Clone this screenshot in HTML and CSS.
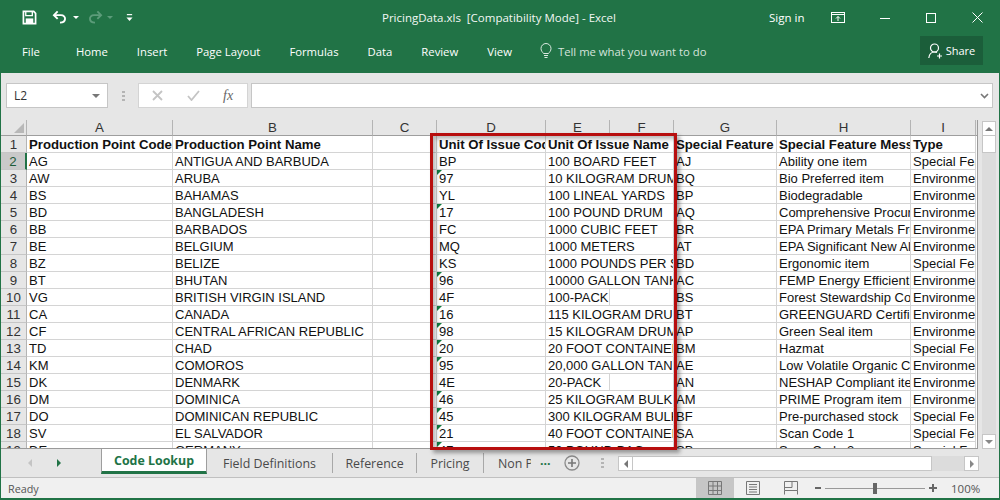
FILE: index.html
```html
<!DOCTYPE html>
<html lang="en">
<head>
<meta charset="utf-8">
<title>PricingData.xls - Excel</title>
<link rel="stylesheet" href="styles.css">
</head>
<body>
<div class="app">
  <header class="titlebar">
    <div class="qat">
      <svg class="ic-save" width="15" height="15" viewBox="0 0 16 16"><path d="M1.500 1.500h11l2 2v11h-13z" fill="none" stroke="#fff" stroke-width="1.800"/><path d="M4 2v4h7V2" fill="none" stroke="#fff" stroke-width="1.400"/><rect x="4" y="9" width="8" height="5.500" fill="#fff"/></svg>
      <svg class="ic-undo" width="16" height="15" viewBox="0 0 17 16"><path d="M6 1.500 2 5.500l4 4" fill="none" stroke="#fff" stroke-width="2"/><path d="M2.500 5.500h7c6 0 6 8-1 8" fill="none" stroke="#fff" stroke-width="2"/></svg>
      <span class="caret"></span>
      <svg class="ic-redo" width="16" height="15" viewBox="0 0 17 16"><path d="M11 1.500l4 4-4 4" fill="none" stroke="#5c9c7a" stroke-width="2"/><path d="M14.500 5.500h-7c-6 0-6 8 1 8" fill="none" stroke="#5c9c7a" stroke-width="2"/></svg>
      <span class="caret caret-dim"></span>
      <svg class="ic-more" width="7" height="8" viewBox="0 0 8 9"><rect x="1" y="0" width="6" height="1.300" fill="#fff"/><path d="M0.500 4h7L4 8z" fill="#fff"/></svg>
    </div>
    <div class="doc-title">PricingData.xls&nbsp; [Compatibility Mode] - Excel</div>
    <div class="signin">Sign in</div>
    <div class="winctl">
      <svg width="14" height="11" viewBox="0 0 14 11"><rect x="0.500" y="0.500" width="13" height="10" fill="none" stroke="#fff"/><path d="M0.500 2.500h13" stroke="#fff"/><path d="M7 9V4.500M5 6.500l2-2 2 2" fill="none" stroke="#fff"/></svg>
      <svg width="10" height="10" viewBox="0 0 10 10"><path d="M0 5.500h10" stroke="#fff"/></svg>
      <svg width="10" height="10" viewBox="0 0 10 10"><rect x="0.500" y="0.500" width="9" height="9" fill="none" stroke="#fff"/></svg>
      <svg width="11" height="11" viewBox="0 0 11 11"><path d="M0.500 0.500l10 10M10.500 0.500l-10 10" stroke="#fff"/></svg>
    </div>
  </header>
  <nav class="ribbon">
    <span class="rtab rtab-file">File</span>
    <span class="rtab">Home</span>
    <span class="rtab">Insert</span>
    <span class="rtab">Page Layout</span>
    <span class="rtab">Formulas</span>
    <span class="rtab">Data</span>
    <span class="rtab">Review</span>
    <span class="rtab">View</span>
    <span class="tell">
      <svg width="12" height="16" viewBox="0 0 12 16"><path d="M3.500 10.500C2.500 9 1 8 1 5.500a5 5 0 0 1 10 0C11 8 9.500 9 8.500 10.500z" fill="none" stroke="#dbe9e1"/><path d="M4 12.500h4M4.500 14.500h3" stroke="#dbe9e1"/></svg>
      Tell me what you want to do
    </span>
    <span class="share">
      <svg width="15" height="16" viewBox="0 0 15 16"><circle cx="6.500" cy="5" r="4" fill="none" stroke="#fff" stroke-width="1.200"/><path d="M0.800 15c.5-4 2.500-6 5.700-6 1 0 1.800.2 2.500.6" fill="none" stroke="#fff" stroke-width="1.200"/><path d="M11.500 10.500v5M9 13h5" stroke="#fff" stroke-width="1.200"/></svg>
      Share
    </span>
  </nav>
  <div class="fbar">
    <div class="namebox"><span>L2</span><i class="tri"></i></div>
    <div class="grip"></div>
    <div class="fbtns">
      <svg width="11" height="11" viewBox="0 0 11 11"><path d="M1 1l9 9M10 1l-9 9" stroke="#c4c4c4" stroke-width="1.800"/></svg>
      <svg width="13" height="11" viewBox="0 0 13 11"><path d="M1 6l3.500 4L12 1" fill="none" stroke="#c4c4c4" stroke-width="1.800"/></svg>
      <span class="fx">fx</span>
    </div>
    <div class="finput"><svg width="9" height="6" viewBox="0 0 9 6"><path d="M1 1l3.500 3.500L8 1" fill="none" stroke="#777" stroke-width="1.600"/></svg></div>
  </div>
  <main class="sheetarea">
    <div class="sheet">
      <div class="hd corner"><i class="corner-tri"></i></div><div class="hd">A</div><div class="hd">B</div><div class="hd">C</div><div class="hd">D</div><div class="hd">E</div><div class="hd">F</div><div class="hd">G</div><div class="hd">H</div><div class="hd">I</div><div class="hd hd-end"></div>

      <div class="num">1</div><div class="c b">Production Point Code</div><div class="c b">Production Point Name</div><div class="c"></div><div class="c b">Unit Of Issue Code</div><div class="c b s2">Unit Of Issue Name</div><div class="c b">Special Feature Code</div><div class="c b">Special Feature Message</div><div class="c b">Type</div><div class="e"></div>

      <div class="num sel">2</div><div class="c">AG</div><div class="c">ANTIGUA AND BARBUDA</div><div class="c"></div><div class="c">BP</div><div class="c s2">100 BOARD FEET</div><div class="c">AJ</div><div class="c">Ability one item</div><div class="c">Special Feature</div><div class="e"></div>

      <div class="num">3</div><div class="c">AW</div><div class="c">ARUBA</div><div class="c"></div><div class="c t">97</div><div class="c s2">10 KILOGRAM DRUM</div><div class="c">BQ</div><div class="c">Bio Preferred item</div><div class="c">Environmental</div><div class="e"></div>

      <div class="num">4</div><div class="c">BS</div><div class="c">BAHAMAS</div><div class="c"></div><div class="c">YL</div><div class="c s2">100 LINEAL YARDS</div><div class="c">BP</div><div class="c">Biodegradable</div><div class="c">Environmental</div><div class="e"></div>

      <div class="num">5</div><div class="c">BD</div><div class="c">BANGLADESH</div><div class="c"></div><div class="c t">17</div><div class="c s2">100 POUND DRUM</div><div class="c">AQ</div><div class="c">Comprehensive Procurement</div><div class="c">Environmental</div><div class="e"></div>

      <div class="num">6</div><div class="c">BB</div><div class="c">BARBADOS</div><div class="c"></div><div class="c">FC</div><div class="c s2">1000 CUBIC FEET</div><div class="c">BR</div><div class="c">EPA Primary Metals Free</div><div class="c">Environmental</div><div class="e"></div>

      <div class="num">7</div><div class="c">BE</div><div class="c">BELGIUM</div><div class="c"></div><div class="c">MQ</div><div class="c s2">1000 METERS</div><div class="c">AT</div><div class="c">EPA Significant New Alternatives</div><div class="c">Environmental</div><div class="e"></div>

      <div class="num">8</div><div class="c">BZ</div><div class="c">BELIZE</div><div class="c"></div><div class="c">KS</div><div class="c s2">1000 POUNDS PER SQUARE INCH</div><div class="c">BD</div><div class="c">Ergonomic item</div><div class="c">Special Feature</div><div class="e"></div>

      <div class="num">9</div><div class="c">BT</div><div class="c">BHUTAN</div><div class="c"></div><div class="c t">96</div><div class="c s2">10000 GALLON TANK</div><div class="c">AC</div><div class="c">FEMP Energy Efficient</div><div class="c">Environmental</div><div class="e"></div>

      <div class="num">10</div><div class="c">VG</div><div class="c">BRITISH VIRGIN ISLAND</div><div class="c"></div><div class="c">4F</div><div class="c">100-PACK</div><div class="c"></div><div class="c">BS</div><div class="c">Forest Stewardship Council</div><div class="c">Environmental</div><div class="e"></div>

      <div class="num">11</div><div class="c">CA</div><div class="c">CANADA</div><div class="c"></div><div class="c t">16</div><div class="c s2">115 KILOGRAM DRUM</div><div class="c">BT</div><div class="c">GREENGUARD Certified</div><div class="c">Environmental</div><div class="e"></div>

      <div class="num">12</div><div class="c">CF</div><div class="c">CENTRAL AFRICAN REPUBLIC</div><div class="c"></div><div class="c t">98</div><div class="c s2">15 KILOGRAM DRUM</div><div class="c">AP</div><div class="c">Green Seal item</div><div class="c">Environmental</div><div class="e"></div>

      <div class="num">13</div><div class="c">TD</div><div class="c">CHAD</div><div class="c"></div><div class="c t">20</div><div class="c s2">20 FOOT CONTAINER</div><div class="c">BM</div><div class="c">Hazmat</div><div class="c">Special Feature</div><div class="e"></div>

      <div class="num">14</div><div class="c">KM</div><div class="c">COMOROS</div><div class="c"></div><div class="c t">95</div><div class="c s2">20,000 GALLON TANK</div><div class="c">AE</div><div class="c">Low Volatile Organic Compound</div><div class="c">Environmental</div><div class="e"></div>

      <div class="num">15</div><div class="c">DK</div><div class="c">DENMARK</div><div class="c"></div><div class="c">4E</div><div class="c">20-PACK</div><div class="c"></div><div class="c">AN</div><div class="c">NESHAP Compliant item</div><div class="c">Environmental</div><div class="e"></div>

      <div class="num">16</div><div class="c">DM</div><div class="c">DOMINICA</div><div class="c"></div><div class="c t">46</div><div class="c s2">25 KILOGRAM BULK BAG</div><div class="c">AM</div><div class="c">PRIME Program item</div><div class="c">Environmental</div><div class="e"></div>

      <div class="num">17</div><div class="c">DO</div><div class="c">DOMINICAN REPUBLIC</div><div class="c"></div><div class="c t">45</div><div class="c s2">300 KILOGRAM BULK BAG</div><div class="c">BF</div><div class="c">Pre-purchased stock</div><div class="c">Special Feature</div><div class="e"></div>

      <div class="num">18</div><div class="c">SV</div><div class="c">EL SALVADOR</div><div class="c"></div><div class="c t">21</div><div class="c s2">40 FOOT CONTAINER</div><div class="c">SA</div><div class="c">Scan Code 1</div><div class="c">Special Feature</div><div class="e"></div>

      <div class="num">19</div><div class="c">DE</div><div class="c">GERMANY</div><div class="c"></div><div class="c t">47</div><div class="c s2">50 POUND BAG</div><div class="c">SB</div><div class="c">Scan Code 2</div><div class="c">Special Feature</div><div class="e"></div>
    </div>
    <aside class="vscroll">
      <div class="sbtn"><i class="arr-up"></i></div>
      <div class="vthumb"></div>
      <div class="vtrack"></div>
      <div class="sbtn"><i class="arr-down"></i></div>
    </aside>
    <div class="callout"></div>
  </main>
  <div class="tabbar">
    <div class="tabnav"><i class="nav-l"></i><i class="nav-r"></i></div>
    <div class="tab active">Code Lookup</div>
    <div class="tab t-field">Field Definitions</div>
    <div class="tab t-ref">Reference</div>
    <div class="tab t-price">Pricing</div>
    <div class="tab t-non"><span class="clip">Non Pricing</span></div>
    <div class="ell">...</div>
    <svg class="plus" width="16" height="16" viewBox="0 0 16 16"><circle cx="8" cy="8" r="7" fill="none" stroke="#8a8a8a" stroke-width="1.300"/><path d="M8 4v8M4 8h8" stroke="#777" stroke-width="1.600"/></svg>
    <div class="grip grip-tab"></div>
    <div class="hscroll">
      <div class="hbtn"><i class="arr-left"></i></div>
      <div class="hthumb"></div>
      <div class="htrack"></div>
      <div class="hbtn"><i class="arr-right"></i></div>
    </div>
  </div>
  <footer class="status">
    <span class="ready">Ready</span>
    <div class="view view-on"><svg width="14" height="14" viewBox="0 0 14 14"><path d="M.5.500h13v13H.5zM.5 5h13M.5 9.500h13M5 .500v13M9.500 .500v13" fill="none" stroke="#777"/></svg></div>
    <div class="view"><svg width="14" height="14" viewBox="0 0 14 14"><path d="M.5.500h13v13H.5z" fill="none" stroke="#777"/><path d="M3 3.500h8M3 6h8M3 8.500h8M3 11h8" stroke="#777"/></svg></div>
    <div class="view"><svg width="14" height="14" viewBox="0 0 14 14"><path d="M.5.500h13v9H.5zM.5 9.500v4M13.500 9.500v4M8 .500v6H.5" fill="none" stroke="#777"/></svg></div>
    <div class="zoom">
      <span class="zminus"></span>
      <div class="zline"><i class="zthumb"></i></div>
      <span class="zplus"></span>
    </div>
    <span class="pct">100%</span>
  </footer>
</div>
</body>
</html>
```
FILE: styles.css
```css
* { box-sizing: border-box; }
html, body { margin: 0; padding: 0; overflow: hidden; }
body { width: 1000px; height: 500px; }

.app {
  width: 1000px; height: 500px;
  display: flex; flex-direction: column;
  background: #e6e6e6;
  border-left: 1px solid #217346;
  border-right: 1px solid #217346;
  border-bottom: 2px solid #217346;
  font-family: "Open Sans", "Noto Sans", sans-serif;
  position: relative;
}

/* title bar */
.titlebar {
  height: 35px; flex: none;
  background: #217346; color: #fff;
  display: flex; align-items: center;
  font-size: 11.500px;
}
.qat { width: 381px; flex: none; display: flex; align-items: center; padding-left: 21px; }
.ic-undo { margin-left: 15px; }
.caret { width: 0; height: 0; border: 3px solid transparent; border-top: 3px solid #fff; border-bottom: 0; margin-left: 5px; }
.caret-dim { border-top-color: #5c9c7a; margin-left: 4px; }
.ic-redo { margin-left: 8px; }
.ic-more { margin-left: 13px; }
.doc-title { width: 387px; flex: none; color: #f2f7f4; }
.signin { width: 36px; flex: none; white-space: nowrap; }
.winctl { display: flex; align-items: center; margin-left: 26px; }
.winctl svg:nth-child(2) { margin-left: 35px; }
.winctl svg:nth-child(3) { margin-left: 36px; }
.winctl svg:nth-child(4) { margin-left: 36px; }

/* ribbon tabs */
.ribbon {
  height: 38px; flex: none;
  background: #217346; color: #fff;
  display: flex; align-items: center;
  font-size: 11.300px;
  padding-bottom: 6px;
  white-space: nowrap;
}
.rtab { margin-right: 29px; }
.rtab-file { margin-left: 21px; margin-right: 36px; }
.tell { display: flex; align-items: center; gap: 6px; margin-left: -1px; color: #d5e4dc; }
.share {
  margin-left: auto; margin-right: 16px;
  width: 63px; height: 29px;
  background: #1b5e3a;
  display: flex; align-items: center; justify-content: center; gap: 3px;
  margin-top: -1px;
  color: #fff;
  font-size: 11px;
}

/* formula row */
.fbar {
  height: 47px; flex: none;
  display: flex; align-items: flex-start;
  padding: 10px 6px 0 5px;
  background: #e6e6e6;
}
.namebox {
  width: 102px; height: 25px;
  background: #fff; border: 1px solid #c6c6c6;
  display: flex; align-items: center; justify-content: space-between;
  padding: 0 7px;
  font-size: 12px; color: #333;
}
.tri { width: 0; height: 0; border: 4px solid transparent; border-top: 4px solid #777; border-bottom: 0; }
.grip {
  width: 3px; height: 10px; margin: 8px 13px 0 14px;
  background: repeating-linear-gradient(#b4b4b4 0 2px, transparent 2px 4px);
}
.fbtns {
  width: 110px; height: 25px;
  background: #fff; border: 1px solid #d4d4d4;
  display: flex; align-items: center;
  padding-left: 13px;
}
.fbtns svg:nth-child(2) { margin-left: 24px; }
.fx { margin-left: 23px; font: italic 14px "Liberation Serif", serif; color: #666; }
.finput {
  flex: 1; height: 25px; margin-left: 3px;
  background: #fff; border: 1px solid #c6c6c6;
  display: flex; align-items: center; justify-content: flex-end;
  padding-right: 3px;
}

/* sheet */
.sheetarea {
  height: 329px; flex: none;
  display: flex;
  position: relative;
  background: #e6e6e6;
}
.sheet {
  width: 977px; height: 329px; flex: none;
  overflow: hidden;
  display: grid;
  grid-template-columns: 26px 146px 200px 64px 109px 64px 64px 103px 134px 65px 1px;
  grid-auto-rows: 17px;
  grid-template-rows: 16px;
  align-content: start;
  background: #fff;
  border-right: 1px solid #9a9a9a;
  border-bottom: 1px solid #9a9a9a;
  font: 13px/16px "Liberation Sans", Arial, sans-serif;
  color: #111;
}
.hd {
  background: #e6e6e6;
  border-right: 1px solid #b4b4b4;
  border-bottom: 1px solid #9e9e9e;
  text-align: center;
  font-size: 13.300px;
  line-height: 16px;
  color: #333;
}
.hd-end { border-right: 0; }
.corner { position: relative; }
.corner-tri {
  position: absolute; right: 2px; bottom: 2px;
  width: 0; height: 0;
  border-left: 10px solid transparent;
  border-bottom: 10px solid #b8b8b8;
}
.num {
  background: #e6e6e6;
  border-right: 1px solid #b4b4b4;
  border-bottom: 1px solid #c6c6c6;
  padding-top: 1px;
  text-align: center;
  font-size: 13.300px;
  color: #333;
}
.num.sel { background: #c9c9c9; border-right: 2px solid #217346; color: #1d5c39; }
.c {
  border-right: 1px solid #d4d4d4;
  border-bottom: 1px solid #d4d4d4;
  padding: 1px 0 0 2px;
  white-space: nowrap;
  overflow: hidden;
  position: relative;
}
.b { font-weight: 700; font-size: 13.200px; }
.s2 { grid-column: span 2; }
.e { background: #fff; }
.t::before {
  content: ""; position: absolute; left: 0; top: 0;
  width: 0; height: 0;
  border-top: 5px solid #107c41;
  border-right: 5px solid transparent;
}

/* vertical scrollbar */
.vscroll {
  flex: 1;
  display: flex; flex-direction: column;
  padding: 1px 3px 0 4px;
  background: #e6e6e6;
}
.sbtn {
  height: 15px; flex: none;
  background: #fff; border: 1px solid #c6c6c6;
  display: flex; align-items: center; justify-content: center;
}
.vthumb { height: 17px; flex: none; background: #fff; border: 1px solid #c6c6c6; border-top: 0; }
.vtrack { height: 281px; flex: none; background: #dcdcdc; }
.arr-up { width: 0; height: 0; border: 4px solid transparent; border-bottom: 4px solid #777; border-top: 0; }
.arr-down { width: 0; height: 0; border: 4px solid transparent; border-top: 4px solid #888; border-bottom: 0; }

/* red highlight drawn over the sheet */
.callout {
  position: absolute; left: 429px; top: 13px;
  width: 247px; height: 317px;
  border: 3px solid #b70e0e;
  box-shadow: 3px 3px 4px rgba(0,0,0,.35), inset 3px 3px 4px rgba(0,0,0,.28);
  pointer-events: none;
  z-index: 2;
}

/* sheet tabs */
.tabbar {
  height: 29px; flex: none;
  display: flex; align-items: flex-start;
  background: #e6e6e6;
  border-bottom: 1px solid #c0c0c0;
  font-size: 12.400px; color: #4a4a4a;
}
.tabnav { width: 100px; height: 28px; flex: none; display: flex; align-items: center; padding: 0 0 0 27px; gap: 25px; }
.nav-l { width: 0; height: 0; border: 4px solid transparent; border-right: 4px solid #c4c4c4; border-left: 0; }
.nav-r { width: 0; height: 0; border: 4px solid transparent; border-left: 4px solid #217346; border-right: 0; }
.tab {
  height: 20px; margin-top: 4px;
  display: flex; align-items: center; justify-content: center;
  flex: none;
  border-right: 1px solid #a8a8a8;
  white-space: nowrap;
}
.tab.active {
  width: 106px; height: 25px; margin-top: 0;
  background: #fff; color: #217346; font-weight: 700;
  border-left: 1px solid #9e9e9e; border-right: 1px solid #9e9e9e;
  border-bottom: 3px solid #217346;
}
.t-field { width: 126px; }
.t-ref { width: 84px; }
.t-price { width: 67px; }
.t-non { width: 47px; border-right: 0; justify-content: flex-start; padding-left: 14px; }
.clip { display: block; width: 33px; overflow: hidden; }
.ell { width: 37px; flex: none; margin-top: 2px; padding-left: 9px; font-weight: 700; color: #217346; line-height: 20px; }
.plus { margin: 6px 0 0 -4px; flex: none; }
.grip-tab { margin: 9px 0 0 21px; height: 12px; }
.hscroll { display: flex; margin: 7px 0 0 14px; height: 15px; }
.hbtn {
  width: 15px; height: 15px;
  background: #fff; border: 1px solid #c6c6c6;
  display: flex; align-items: center; justify-content: center;
}
.hthumb { width: 299px; background: #fff; border: 1px solid #c6c6c6; border-left: 0; }
.htrack { width: 32px; background: #dcdcdc; }
.arr-left { width: 0; height: 0; border: 4px solid transparent; border-right: 4px solid #777; border-left: 0; }
.arr-right { width: 0; height: 0; border: 4px solid transparent; border-left: 4px solid #888; border-right: 0; }

/* status bar */
.status {
  height: 20px; flex: none;
  display: flex; align-items: center;
  background: #f0f0f0;
  font-size: 10.800px; color: #555;
}
.ready { width: 695px; flex: none; padding-left: 7px; }
.view { width: 38px; height: 20px; flex: none; display: flex; align-items: center; justify-content: center; }
.view-on { background: #c6c6c6; }
.zoom { display: flex; align-items: center; width: 125px; flex: none; padding-left: 5px; }
.zminus { width: 6px; height: 2px; background: #666; flex: none; }
.zline { width: 100px; height: 1px; background: #999; margin-left: 4px; position: relative; flex: none; }
.zthumb { position: absolute; left: 48px; top: -5px; width: 4px; height: 11px; background: #666; }
.zplus { width: 8px; height: 8px; margin-left: 4px; flex: none; background: linear-gradient(#666,#666) center/8px 2px no-repeat, linear-gradient(#666,#666) center/2px 8px no-repeat; }
.pct { margin-left: 16px; font-size: 11.500px; }
```
